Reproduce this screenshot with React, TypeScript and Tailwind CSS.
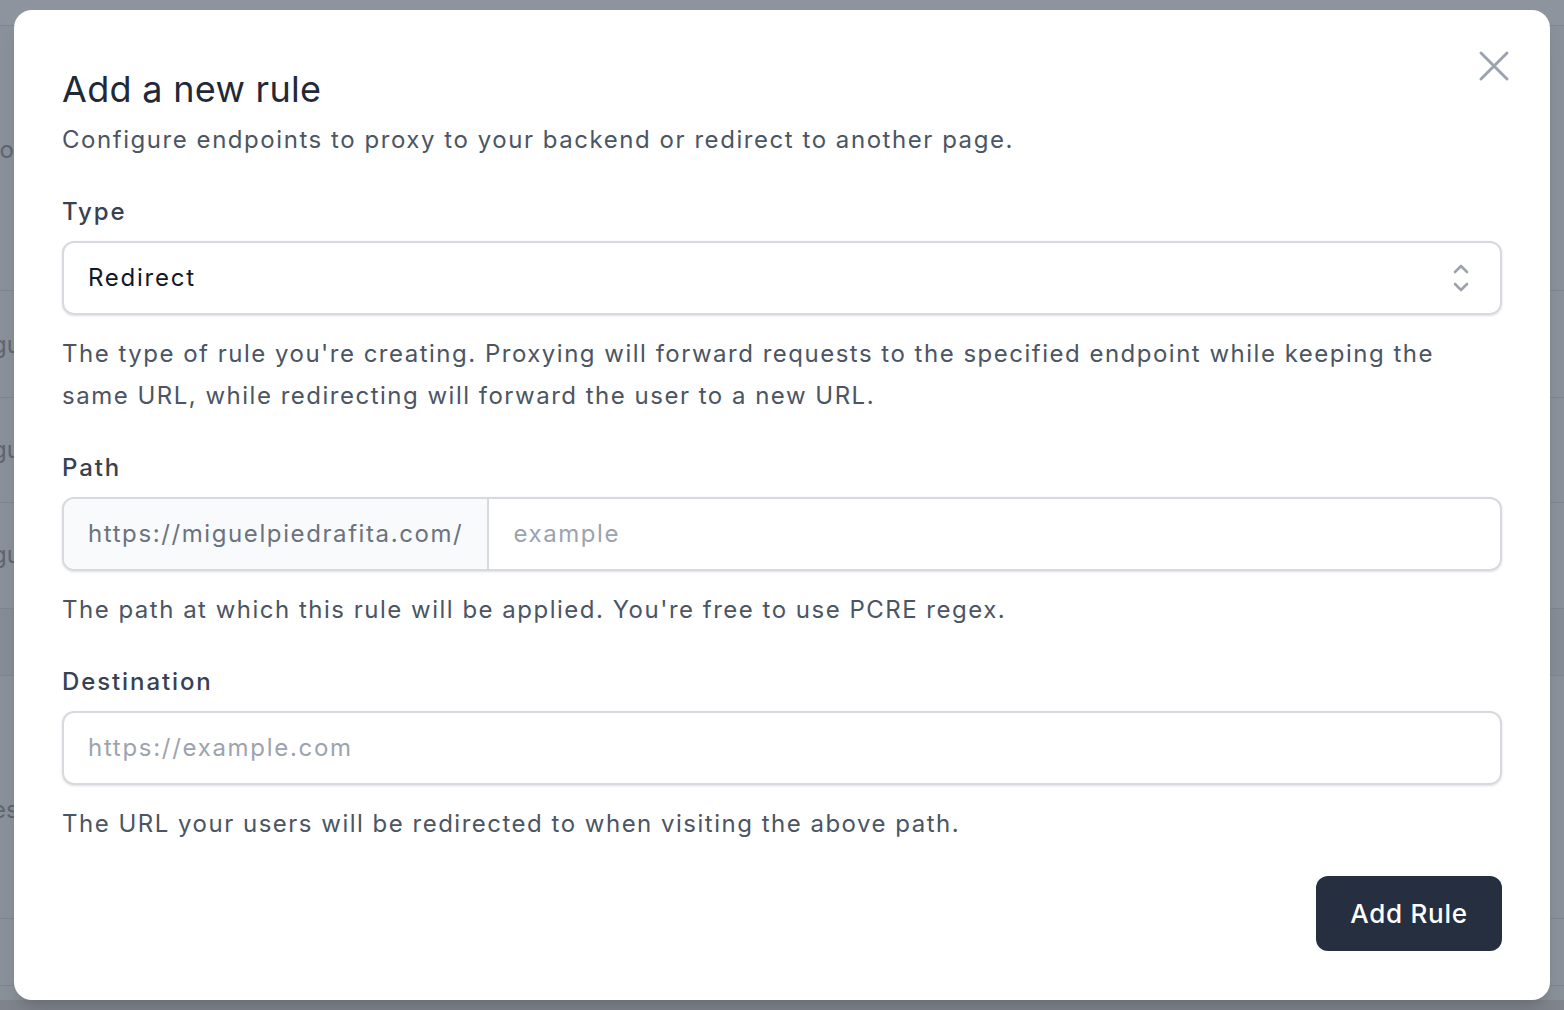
import React from "react";

function Backdrop() {
  const lines = [25, 290, 397, 502, 608, 675, 918, 985];
  const texts: { y: number; t: string }[] = [
    { y: 150, t: "to" },
    { y: 345, t: "gu" },
    { y: 450, t: "gu" },
    { y: 555, t: "gu" },
    { y: 810, t: "es" },
  ];
  return (
    <div className="absolute inset-0 bg-[#8b919a] overflow-hidden">
      <div className="absolute left-0 right-0 top-0 h-[25px] bg-[#8e949d]" />
      <div className="absolute left-0 right-0 top-[608px] h-[67px] bg-[#878d96]" />
      <div className="absolute left-0 right-0 top-[1000px] bottom-0 bg-[#80858d]" />
      {lines.map((y) => (
        <div key={y} className="absolute left-0 right-0 h-px bg-[#80868f]" style={{ top: y }} />
      ))}
      {texts.map((x) => (
        <div
          key={x.y}
          className="absolute left-[-8px] whitespace-nowrap text-[24px] text-[#60666f] leading-none"
          style={{ top: x.y - 12 }}
        >
          {x.t}
        </div>
      ))}
    </div>
  );
}

export default function App() {
  return (
    <div
      className="relative w-[1564px] h-[1010px] overflow-hidden"
      style={{ fontFamily: "Inter, 'Noto Sans', sans-serif" }}
    >
      <Backdrop />
      <div className="absolute inset-0 pt-[10px] px-[14px]">
        <div className="relative bg-white rounded-[18px] h-[990px] px-[48px] pt-[55px] shadow-xl">
          <button className="absolute right-[40px] top-[40px] w-[32px] h-[32px] flex items-center justify-center text-[#9ca3af]">
            <svg width="32" height="32" viewBox="0 0 32 32" fill="none" stroke="currentColor" strokeWidth="3" strokeLinecap="round">
              <path d="M3 3 L29 29 M29 3 L3 29" />
            </svg>
          </button>
          <h2 className="text-[36px] leading-[48px] text-[#1f2937] font-normal tracking-[0.3px]">Add a new rule</h2>
          <p className="mt-[9px] text-[24px] leading-[36px] text-[#4b5563] tracking-[1.55px]">
            Configure endpoints to proxy to your backend or redirect to another page.
          </p>

          <label className="block mt-[36px] text-[24px] leading-[36px] font-medium text-[#374151] tracking-[1.9px]">Type</label>
          <div className="mt-[11px] h-[74px] rounded-[12px] border-2 border-[#d6d9de] shadow-sm flex items-center pl-[24px] pr-[30px]">
            <span className="flex-1 text-[24px] text-[#111827] tracking-[1.75px]">Redirect</span>
            <svg width="18" height="32" viewBox="0 0 18 32" fill="none" stroke="#9ca3af" strokeWidth="2.6" strokeLinecap="round" strokeLinejoin="round">
              <path d="M3 10 L9 4 L15 10" />
              <path d="M3 22 L9 28 L15 22" />
            </svg>
          </div>
          <p className="mt-[18px] text-[24px] leading-[42px] text-[#4b5563] tracking-[1.5px]">
            The type of rule you're creating. Proxying will forward requests to the specified endpoint while keeping the
            same URL, while redirecting will forward the user to a new URL.
          </p>

          <label className="block mt-[33px] text-[24px] leading-[36px] font-medium text-[#374151] tracking-[1.9px]">Path</label>
          <div className="mt-[11px] h-[74px] rounded-[12px] border-2 border-[#d6d9de] shadow-sm flex overflow-hidden">
            <div className="bg-[#f9fafb] border-r-2 border-[#d6d9de] flex items-center pl-[24px] pr-[24px] text-[24px] text-[#6b7280] tracking-[1.6px]">
              https://miguelpiedrafita.com/
            </div>
            <div className="flex-1 flex items-center pl-[24px] text-[24px] text-[#9ca3af] tracking-[1.6px]">example</div>
          </div>
          <p className="mt-[18px] text-[24px] leading-[42px] text-[#4b5563] tracking-[1.5px]">
            The path at which this rule will be applied. You're free to use PCRE regex.
          </p>

          <label className="block mt-[33px] text-[24px] leading-[36px] font-medium text-[#374151] tracking-[1.9px]">Destination</label>
          <div className="mt-[11px] h-[74px] rounded-[12px] border-2 border-[#d6d9de] shadow-sm flex items-center pl-[24px] text-[24px] text-[#9ca3af] tracking-[1.7px]">
            https://example.com
          </div>
          <p className="mt-[18px] text-[24px] leading-[42px] text-[#4b5563] tracking-[1.5px]">
            The URL your users will be redirected to when visiting the above path.
          </p>

          <div className="mt-[31px] flex justify-end">
            <button className="h-[75px] w-[186px] rounded-[12px] bg-[#252f3f] text-white text-[26px] font-medium tracking-[0.75px] flex items-center justify-center">
              Add Rule
            </button>
          </div>
        </div>
      </div>
    </div>
  );
}
